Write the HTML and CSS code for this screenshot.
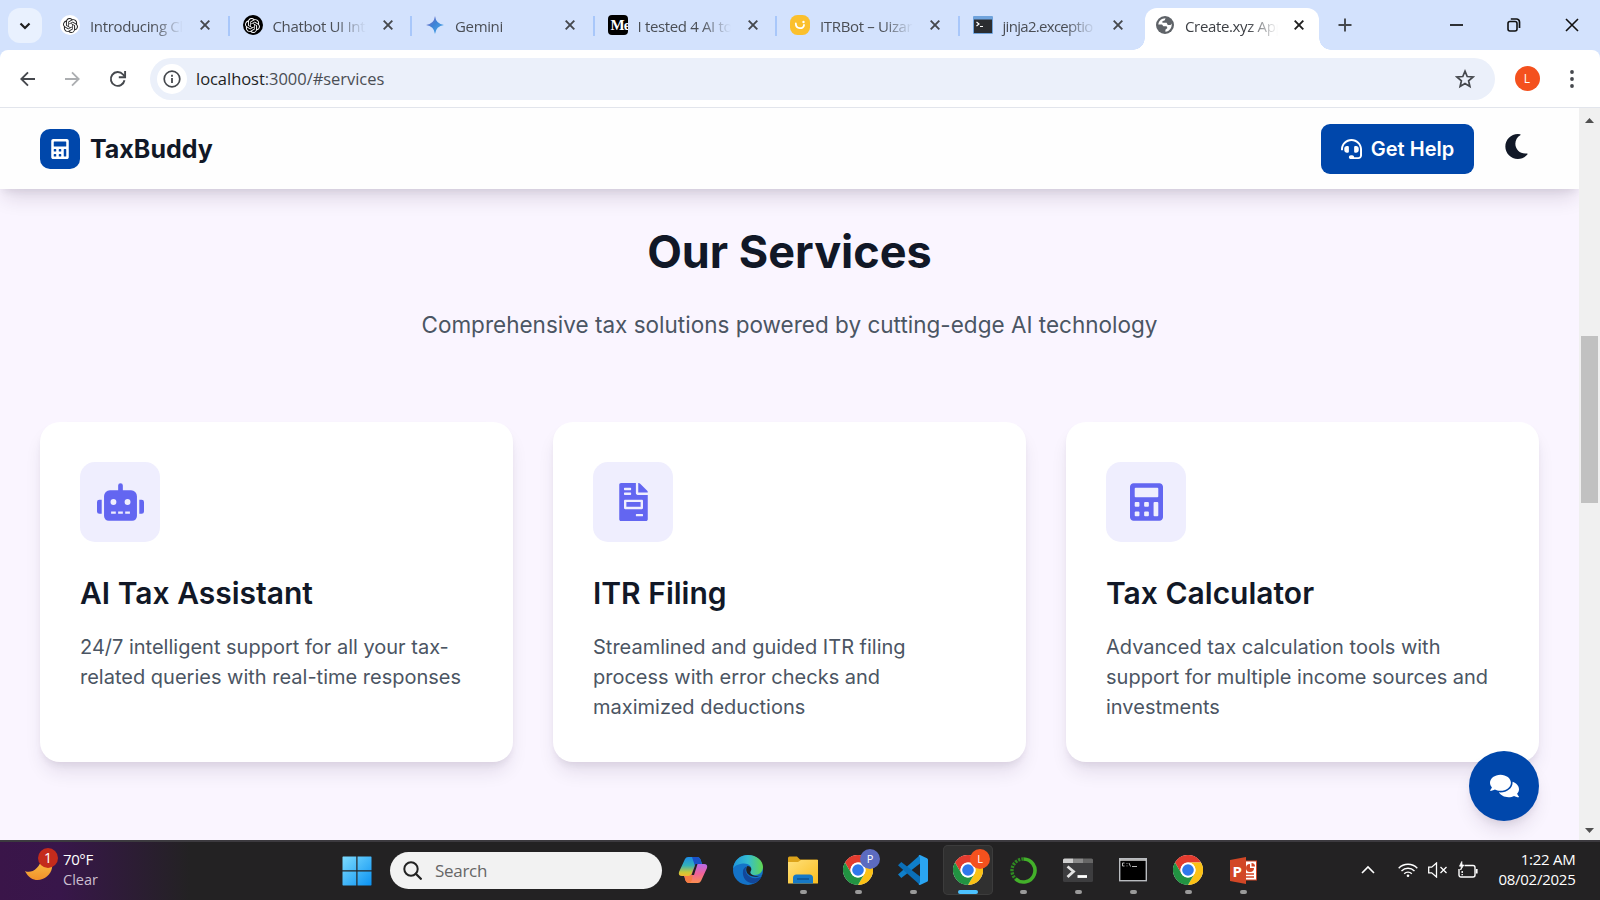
FILE: index.html
```html
<!DOCTYPE html>
<html lang="en">
<head>
<meta charset="utf-8">
<title>TaxBuddy</title>
<link rel="stylesheet" href="styles.css">
</head>
<body>
<svg class="defs" width="0" height="0">
  <defs>
    <symbol id="close" viewBox="0 0 12 12"><path d="M1.7 1.7l8.6 8.6M10.3 1.7l-8.6 8.6" stroke="currentColor" stroke-width="1.9" fill="none"/></symbol>
    <symbol id="openai" viewBox="0 0 24 24"><path fill="currentColor" d="M22.2819 9.8211a5.9847 5.9847 0 0 0-.5157-4.9108 6.0462 6.0462 0 0 0-6.5098-2.9A6.0651 6.0651 0 0 0 4.9807 4.1818a5.9847 5.9847 0 0 0-3.9977 2.9 6.0462 6.0462 0 0 0 .7427 7.0966 5.98 5.98 0 0 0 .511 4.9107 6.051 6.051 0 0 0 6.5146 2.9001A5.9847 5.9847 0 0 0 13.2599 24a6.0557 6.0557 0 0 0 5.7718-4.2058 5.9894 5.9894 0 0 0 3.9977-2.9001 6.0557 6.0557 0 0 0-.7475-7.0729zm-9.022 12.6081a4.4755 4.4755 0 0 1-2.8764-1.0408l.1419-.0804 4.7783-2.7582a.7948.7948 0 0 0 .3927-.6813v-6.7369l2.02 1.1686a.071.071 0 0 1 .038.052v5.5826a4.504 4.504 0 0 1-4.4945 4.4944zm-9.6607-4.1254a4.4708 4.4708 0 0 1-.5346-3.0137l.142.0852 4.783 2.7582a.7712.7712 0 0 0 .7806 0l5.8428-3.3685v2.3324a.0804.0804 0 0 1-.0332.0615L9.74 19.9502a4.4992 4.4992 0 0 1-6.1408-1.6464zM2.3408 7.8956a4.485 4.485 0 0 1 2.3655-1.9728V11.6a.7664.7664 0 0 0 .3879.6765l5.8144 3.3543-2.0201 1.1685a.0757.0757 0 0 1-.071 0l-4.8303-2.7865A4.504 4.504 0 0 1 2.3408 7.872zm16.5963 3.8558L13.1038 8.364 15.1192 7.2a.0757.0757 0 0 1 .071 0l4.8303 2.7913a4.4944 4.4944 0 0 1-.6765 8.1042v-5.6772a.79.79 0 0 0-.407-.667zm2.0107-3.0231l-.142-.0852-4.7735-2.7818a.7759.7759 0 0 0-.7854 0L9.409 9.2297V6.8974a.0662.0662 0 0 1 .0284-.0615l4.8303-2.7866a4.4992 4.4992 0 0 1 6.6802 4.66zM8.3065 12.863l-2.02-1.1638a.0804.0804 0 0 1-.038-.0567V6.0742a4.4992 4.4992 0 0 1 7.3757-3.4537l-.142.0805L8.704 5.459a.7948.7948 0 0 0-.3927.6813zm1.0976-2.3654l2.602-1.4998 2.6069 1.4998v2.9994l-2.5974 1.4997-2.6067-1.4997Z"/></symbol>
    <symbol id="calculator" viewBox="0 0 448 512"><path fill="currentColor" fill-rule="evenodd" d="M400 0H48C22.4 0 0 22.4 0 48v416c0 25.6 22.4 48 48 48h352c25.6 0 48-22.4 48-48V48c0-25.6-22.4-48-48-48zM76.800 384h38.400q12.800 0 12.800 12.800v38.400q0 12.800-12.800 12.800h-38.400q-12.800 0-12.800-12.800v-38.400q0-12.800 12.800-12.800zM76.800 256h38.400q12.800 0 12.800 12.800v38.400q0 12.800-12.800 12.800h-38.400q-12.800 0-12.800-12.800v-38.400q0-12.800 12.800-12.800zM204.800 384h38.400q12.800 0 12.800 12.800v38.400q0 12.800-12.800 12.800h-38.400q-12.800 0-12.800-12.800v-38.400q0-12.800 12.800-12.800zM204.800 256h38.400q12.800 0 12.800 12.800v38.400q0 12.800-12.800 12.800h-38.400q-12.800 0-12.800-12.800v-38.400q0-12.800 12.800-12.800zM332.800 256h38.400q12.800 0 12.800 12.800v166.400q0 12.800-12.800 12.800h-38.400q-12.800 0-12.800-12.800v-166.400q0-12.800 12.800-12.800zM76.800 64h294.400q12.800 0 12.800 12.800v102.400q0 12.800-12.800 12.800h-294.400q-12.800 0-12.800-12.800v-102.400q0-12.800 12.800-12.800z"/></symbol>
    <symbol id="chrome" viewBox="0 0 48 48">
      <circle cx="24" cy="24" r="24" fill="#fff"/>
      <path fill="#e33b2e" d="M3.2 12A24 24 0 0 1 44.8 12H24A12 12 0 0 0 13.6 30z"/>
      <path fill="#fbc116" d="M44.8 12A24 24 0 0 1 24 48L34.4 30A12 12 0 0 0 24 12z"/>
      <path fill="#229342" d="M24 48A24 24 0 0 1 3.2 12L13.6 30A12 12 0 0 0 34.4 30z"/>
      <circle cx="24" cy="24" r="12" fill="#fff"/><circle cx="24" cy="24" r="9.3" fill="#2f78ec"/>
    </symbol>
    <linearGradient id="gGem" x1="0" y1="0" x2="1" y2="1"><stop offset="0" stop-color="#a06ac0"/><stop offset=".45" stop-color="#3d82d6"/><stop offset="1" stop-color="#4fb4ee"/></linearGradient>
    <linearGradient id="gWin" x1="0" y1="0" x2="1" y2="1"><stop offset="0" stop-color="#7ddcff"/><stop offset="1" stop-color="#0a92f2"/></linearGradient>
    <linearGradient id="gMoon" x1="0" y1="0" x2="0" y2="1"><stop offset="0" stop-color="#fbc64a"/><stop offset="1" stop-color="#f2902a"/></linearGradient>
    <linearGradient id="gCopA" x1="0" y1="0" x2="0" y2="1"><stop offset="0" stop-color="#1c8ce8"/><stop offset=".45" stop-color="#34b1b8"/><stop offset=".8" stop-color="#c7c93a"/><stop offset="1" stop-color="#f2b72e"/></linearGradient>
    <linearGradient id="gCopB" x1="0" y1="0" x2="0" y2="1"><stop offset="0" stop-color="#b66be8"/><stop offset=".5" stop-color="#f0629a"/><stop offset="1" stop-color="#fb8f50"/></linearGradient>
    <linearGradient id="gEdge" x1="0" y1="0" x2="1" y2="0"><stop offset="0" stop-color="#1f96dc"/><stop offset=".5" stop-color="#35bdd0"/><stop offset="1" stop-color="#62d84f"/></linearGradient>
    <linearGradient id="gFold" x1="0" y1="0" x2="1" y2="1"><stop offset="0" stop-color="#ffe07a"/><stop offset="1" stop-color="#f9bd1f"/></linearGradient>
  </defs>
</svg>

<div class="screen">
  <div class="tabstrip">
    <button class="tab-search"><svg width="12" height="12" viewBox="0 0 12 12"><path d="M1.5 3.5L6 8l4.500-4.500" fill="none" stroke="#1f1f1f" stroke-width="2.200"/></svg></button>
    <div class="tab"><span class="fav fav-round fav-light"><svg width="15" height="15"><use href="#openai"/></svg></span><span class="tab-title">Introducing Cl</span><svg class="x"><use href="#close"/></svg></div>
    <div class="tab"><span class="fav fav-round fav-dark"><svg width="15" height="15"><use href="#openai"/></svg></span><span class="tab-title">Chatbot UI Int</span><svg class="x"><use href="#close"/></svg></div>
    <div class="tab"><span class="fav"><svg width="18" height="18" viewBox="0 0 18 18"><path fill="url(#gGem)" d="M9 0Q10 8 18 9Q10 10 9 18Q8 10 0 9Q8 8 9 0z"/></svg></span><span class="tab-title">Gemini</span><svg class="x"><use href="#close"/></svg></div>
    <div class="tab"><span class="fav fav-medium">Me</span><span class="tab-title">I tested 4 AI to</span><svg class="x"><use href="#close"/></svg></div>
    <div class="tab"><span class="fav"><svg width="20" height="20" viewBox="0 0 20 20"><rect width="20" height="20" rx="7.500" fill="#fbc02d"/><path d="M5.800 8.500c0 6 8.200 6 8.200 1.500" fill="none" stroke="#fff" stroke-width="1.800" stroke-linecap="round"/><circle cx="13.500" cy="7" r="1.200" fill="#fff"/></svg></span><span class="tab-title">ITRBot – Uizar</span><svg class="x"><use href="#close"/></svg></div>
    <div class="tab no-sep"><span class="fav"><svg width="20" height="18" viewBox="0 0 20 18"><rect width="20" height="18" rx="1" fill="#6fa3dc"/><rect x="1" y="3.500" width="18" height="13.500" fill="#2b2d30"/><path d="M3.500 6l2.500 2-2.500 2M7 10.500h3" fill="none" stroke="#fff" stroke-width="1.200"/></svg></span><span class="tab-title tight">jinja2.exceptio</span><svg class="x"><use href="#close"/></svg></div>
    <div class="tab active"><span class="fav"><svg width="18" height="18" viewBox="0 0 18 18"><circle cx="9" cy="9" r="9" fill="#5f6368"/><path fill="#fff" d="M2.300 8.500C2.600 5 5.500 2.300 9.500 2.200L8.800 4.200 6.400 5.200v1.600h4.200l1.200 2.200h2.800l1-1.600c.6 4-2 8-6.200 8.300v-2l2-1.700-.8-1.700H7.400L6 8.600z"/></svg></span><span class="tab-title">Create.xyz App</span><svg class="x dark"><use href="#close"/></svg></div>
    <svg class="new-tab" width="14" height="14" viewBox="0 0 14 14"><path d="M7 .5v13M.5 7h13" stroke="#45484d" stroke-width="1.900"/></svg>
    <div class="win-controls">
      <svg width="13" height="14" viewBox="0 0 13 14"><path d="M0 7h13" stroke="#111" stroke-width="1.700"/></svg>
      <svg width="14" height="14" viewBox="0 0 14 14"><rect x="1" y="3.500" width="9" height="9.500" rx="2" fill="none" stroke="#111" stroke-width="1.600"/><path d="M3.800 1h5.700a3 3 0 0 1 3 3v6" fill="none" stroke="#111" stroke-width="1.700"/></svg>
      <svg width="14" height="14" viewBox="0 0 14 14"><path d="M1 1l12 12M13 1L1 13" stroke="#111" stroke-width="1.600"/></svg>
    </div>
  </div>

  <div class="toolbar">
    <svg width="16" height="16" viewBox="0 0 16 16"><path d="M15 8H1.500M8 1.300L1.300 8 8 14.700" fill="none" stroke="#45484d" stroke-width="1.900"/></svg>
    <svg width="16" height="16" viewBox="0 0 16 16"><path d="M1 8h13.500M8 1.300L14.700 8 8 14.700" fill="none" stroke="#acaeb1" stroke-width="1.800"/></svg>
    <svg width="18" height="18" viewBox="0 0 18 18"><path d="M15.500 10.300A6.900 6.900 0 1 1 14 4.500L15.600 6.300" fill="none" stroke="#45484d" stroke-width="1.900"/><path d="M16.100 1v6.300H9.800" fill="none" stroke="#45484d" stroke-width="1.900"/></svg>
    <div class="omnibox">
      <span class="info"><svg width="18" height="18" viewBox="0 0 18 18"><circle cx="9" cy="9" r="7.800" fill="none" stroke="#45484d" stroke-width="1.700"/><path d="M9 8v5M9 4.800v1.900" stroke="#45484d" stroke-width="1.800"/></svg></span>
      <span class="url"><b>localhost</b>:3000/#services</span>
      <svg width="20" height="20" viewBox="0 0 20 20"><path d="M10 2.200l2.200 5.300 5.800.5-4.400 3.800 1.300 5.700L10 14.500l-4.900 3 1.300-5.700L2 8l5.800-.5z" fill="none" stroke="#45484d" stroke-width="1.700"/></svg>
    </div>
    <span class="avatar">L</span>
    <svg class="kebab" width="4" height="18" viewBox="0 0 4 18" fill="#45484d"><circle cx="2" cy="2" r="1.900"/><circle cx="2" cy="9" r="1.900"/><circle cx="2" cy="16" r="1.900"/></svg>
  </div>

  <div class="viewport">
    <div class="page">
      <header class="site-header">
        <span class="logo"><svg width="18" height="20"><use href="#calculator"/></svg></span>
        <span class="brand">TaxBuddy</span>
        <button class="help"><svg width="21" height="20" viewBox="0 0 512 512" preserveAspectRatio="none" fill="#fff"><path d="M192 208c0-17.670-14.330-32-32-32h-16c-35.350 0-64 28.650-64 64v48c0 35.350 28.650 64 64 64h16c17.670 0 32-14.330 32-32V208zm176 144c35.350 0 64-28.650 64-64v-48c0-35.350-28.650-64-64-64h-16c-17.670 0-32 14.330-32 32v112c0 17.670 14.330 32 32 32h16zM256 0C113.180 0 4.580 118.830 0 256v16c0 8.840 7.160 16 16 16h16c8.840 0 16-7.160 16-16v-16c0-114.690 93.310-208 208-208s208 93.310 208 208h-.12c.08 2.430.12 165.720.12 165.720 0 23.350-18.930 42.280-42.280 42.280H320c0-26.510-21.490-48-48-48h-32c-26.510 0-48 21.490-48 48s21.490 48 48 48h181.720c49.860 0 90.280-40.420 90.280-90.280V256C507.420 118.830 398.820 0 256 0z"/></svg>Get Help</button>
        <svg class="moon" width="25" height="25" viewBox="0 0 512 512" fill="#111827"><path d="M283.211 512c78.962 0 151.079-35.925 198.857-94.792 7.068-8.708-.639-21.430-11.562-19.350-124.203 23.654-238.262-71.576-238.262-196.954 0-72.222 38.662-138.635 101.498-174.394 9.686-5.512 7.250-20.197-3.756-22.230A258.156 258.156 0 0 0 283.211 0c-141.309 0-256 114.511-256 256 0 141.309 114.511 256 256 256z"/></svg>
      </header>
      <main class="services">
        <h2>Our Services</h2>
        <p class="lead">Comprehensive tax solutions powered by cutting-edge AI technology</p>
        <div class="cards">
          <article class="card">
            <span class="tile"><svg width="47" height="38" viewBox="0 0 640 512" fill="#6366f1"><path d="M32,224H64V416H32A32,32,0,0,1,0,384V256A32,32,0,0,1,32,224Zm512-48V448a64,64,0,0,1-64,64H160a64,64,0,0,1-64-64V176a80,80,0,0,1,80-80H288V32a32,32,0,0,1,64,0V96H464A80,80,0,0,1,544,176ZM264,256a40,40,0,1,0-40,40A40,40,0,0,0,264,256Zm-8,128H192v32h64Zm96,0H288v32h64ZM456,256a40,40,0,1,0-40,40A40,40,0,0,0,456,256Zm-8,128H384v32h64ZM640,256V384a32,32,0,0,1-32,32H576V224h32A32,32,0,0,1,640,256Z"/></svg></span>
            <h3>AI Tax Assistant</h3>
            <p>24/7 intelligent support for all your tax-related queries with real-time responses</p>
          </article>
          <article class="card">
            <span class="tile"><svg width="29" height="38" viewBox="0 0 384 512" fill="#6366f1"><path d="M288 256H96v64h192v-64zm89-151L279.100 7c-4.500-4.500-10.600-7-17-7H256v128h128v-6.100c0-6.300-2.500-12.400-7-16.900zm-153 31V0H24C10.700 0 0 10.700 0 24v464c0 13.300 10.700 24 24 24h336c13.300 0 24-10.700 24-24V160H248c-13.200 0-24-10.800-24-24zM64 72c0-4.420 3.580-8 8-8h80c4.420 0 8 3.580 8 8v16c0 4.420-3.580 8-8 8H72c-4.420 0-8-3.580-8-8V72zm0 64c0-4.420 3.580-8 8-8h80c4.420 0 8 3.580 8 8v16c0 4.420-3.580 8-8 8H72c-4.420 0-8-3.580-8-8v-16zm256 304c0 4.420-3.580 8-8 8h-80c-4.420 0-8-3.580-8-8v-16c0-4.420 3.580-8 8-8h80c4.420 0 8 3.580 8 8v16zm0-200v96c0 8.840-7.160 16-16 16H80c-8.840 0-16-7.160-16-16v-96c0-8.840 7.160-16 16-16h224c8.840 0 16 7.160 16 16z"/></svg></span>
            <h3>ITR Filing</h3>
            <p>Streamlined and guided ITR filing process with error checks and maximized deductions</p>
          </article>
          <article class="card">
            <span class="tile"><svg width="33" height="38"><use href="#calculator"/></svg></span>
            <h3>Tax Calculator</h3>
            <p>Advanced tax calculation tools with support for multiple income sources and investments</p>
          </article>
        </div>
      </main>
      <button class="chat"><svg width="29" height="26" viewBox="0 0 576 512" fill="#fff"><path d="M416 192c0-88.400-93.100-160-208-160S0 103.600 0 192c0 34.300 14.100 65.900 38 92-13.400 30.200-35.500 54.200-35.800 54.500-2.200 2.300-2.800 5.700-1.500 8.700S4.800 352 8 352c36.600 0 66.900-12.300 88.700-25 32.200 15.700 70.300 25 111.300 25 114.900 0 208-71.600 208-160zm122 220c23.900-26 38-57.700 38-92 0-66.900-53.500-124.200-129.300-148.100.9 6.600 1.300 13.300 1.300 20.100 0 105.900-107.700 192-240 192-10.800 0-21.300-.8-31.700-1.900C207.800 439.600 281.800 480 368 480c41 0 79.100-9.200 111.300-25 21.800 12.700 52.100 25 88.700 25 3.200 0 6.100-1.900 7.300-4.800 1.300-2.900.7-6.300-1.500-8.700-.3-.3-22.400-24.200-35.800-54.500z"/></svg></button>
    </div>
    <div class="scrollbar">
      <svg width="9" height="5" viewBox="0 0 9 5"><path d="M0 5L4.500 0 9 5z" fill="#505050"/></svg>
      <span class="thumb"></span>
      <svg width="9" height="5" viewBox="0 0 9 5"><path d="M0 0l4.500 5L9 0z" fill="#505050"/></svg>
    </div>
  </div>

  <div class="taskbar">
    <div class="weather">
      <div class="weather-icon"><svg width="28" height="24" viewBox="0 0 28 24"><path d="M0 14C6 17 15 12 17 0C24 0 28 5 27 11C25 22 8 30 0 14z" fill="url(#gMoon)"/></svg><span class="count">1</span></div>
      <div class="weather-text"><div>70°F</div><div class="dim">Clear</div></div>
    </div>
    <svg class="start" width="30" height="30" viewBox="0 0 30 30"><path fill="url(#gWin)" d="M1 .5h13.300v13.800H.5V1zM15.500.5h13.500l.5.500v13.300h-14zM.5 15.500h13.800v14H1l-.5-.5zM15.500 15.500h14v13.500l-.5.500H15.500z"/></svg>
    <div class="search"><svg width="19" height="19" viewBox="0 0 19 19"><circle cx="8" cy="8" r="6.700" fill="none" stroke="#222" stroke-width="2"/><path d="M12.800 12.800l5 5" stroke="#222" stroke-width="2.300" stroke-linecap="round"/></svg>Search</div>
    <div class="apps">
      <div class="app"><svg width="30" height="28" viewBox="0 0 30 28"><path fill="url(#gCopA)" d="M7 3Q8 1 10 1h9q3 0 4 4l1 3h-4q-2 0-3 3l-2.500 7q-1 2-3 2H4Q0 20 1 16z"/><path fill="#1a51c8" d="M14 1h5q3 0 4 4l1 3h-4q-2 0-3 2z"/><path fill="url(#gCopB)" d="M23 25q-1 2-3 2h-9q-3 0-4-4l-1-3h5q2 0 3-3l2.500-7q1-2 3-2H26q4 0 3 4z"/><path fill="#f57b43" d="M7 20h5q2 0 3-3l-1 7q-1 3-3 3q-3 0-4-4z"/><path fill="#232223" d="M17.500 8h2l-3.500 11h-2.500z"/></svg></div>
      <div class="app"><svg width="30" height="30" viewBox="0 0 30 30"><circle cx="15" cy="15" r="15" fill="#1473c8"/><path d="M0 14C1 5 7 0 15 0c9 0 15 6 15 12 0 5-4 8-8 8-4 0-5.500-2-4.500-3.500C20 13 17 8 10 8.500 5 9 1 11 0 14z" fill="url(#gEdge)"/><path d="M10 16c-1 7 4 12 10 12.500 4-1 7-3.500 8.500-7-5 3-12 2-15-3-1.500-2.500-1-5 0-7-2 1-3.300 2.500-3.500 4.500z" fill="#12479a"/><path d="M17.500 16.500c2-2.500 0-5.500-3-5.500-2 2-1.500 6 .5 8 3 3 9 4 13.500 1l1.500 1-2 2.500c2-3 2-4 1-3.500-5 2.500-13 0-11.500-3.500z" fill="#222"/></svg></div>
      <div class="app run"><svg width="30" height="28" viewBox="0 0 30 28"><path d="M0 2Q0 .5 1.500.5H9l3 3H29q1 0 1 1V10H0z" fill="#dca31a"/><path d="M0 6h10l3-2h17v23q0 .5-.5.500H.5q-.5 0-.5-.5z" fill="url(#gFold)"/><path d="M5 27.500V22q0-3.500 3.500-3.500h13q3.500 0 3.500 3.500v5.500z" fill="#1679c6"/><path d="M9 23h12" stroke="#0b4c8a" stroke-width="1.300"/></svg></div>
      <div class="app run"><svg width="30" height="30"><use href="#chrome"/></svg><span class="badge p">P</span></div>
      <div class="app run"><svg width="30" height="30" viewBox="0 0 30 30"><path fill="#0f7fca" d="M22 0L0 19.500 3.300 23 22 8.500z"/><path fill="#0a6fb8" d="M3.300 7L0 10.300 22 30V21.500z"/><path fill="#2aa5f2" d="M22 0l7 3.200q1 .5 1 1.500v20.600q0 1-1 1.500L22 30q-1 0-1.500-1 1.500-.5 1.500-2V3q0-1.500-1.500-2Q21 0 22 0z"/></svg></div>
      <div class="app run current"><svg width="30" height="30"><use href="#chrome"/></svg><span class="badge l">L</span></div>
      <div class="app run"><svg width="27" height="27" viewBox="0 0 27 27" fill="none"><path d="M13.500 2a11.500 11.500 0 1 1-8 19.800" stroke="#43b02a" stroke-width="3.600"/><path d="M13.500 2A11.500 11.500 0 0 0 5.500 21.800" stroke="#2f8a22" stroke-width="3.400" stroke-dasharray="2.200 1.100"/></svg></div>
      <div class="app run"><svg width="30" height="24" viewBox="0 0 30 24"><rect y="1" width="30" height="23" rx="1.500" fill="#3d3d3f"/><path d="M0 5V2Q0 .5 1.500.5H10V5z" fill="#cfcfcf"/><path d="M10 .5h10V5H10z" fill="#8a8a8a"/><path d="M20 .5h8.500Q30 .5 30 2v3H20z" fill="#666"/><path d="M4.500 8.500l6 5-6 5.500" fill="none" stroke="#e2e2e2" stroke-width="2.800"/><path d="M14.500 18.500h9.500" stroke="#fff" stroke-width="2.800"/></svg></div>
      <div class="app run"><svg width="28" height="24" viewBox="0 0 28 24"><rect x=".7" y=".7" width="26.600" height="22" fill="#000" stroke="#b9bcc0" stroke-width="1.400"/><path d="M1 2h26" stroke="#d8d8d8" stroke-width="1.500"/><path d="M5.500 5h-2v3h2M8 5v.8M8 7.500v.8M10 5l1.500 3.500M13 8.500h5" stroke="#ccc" stroke-width=".9" fill="none"/></svg></div>
      <div class="app run"><svg width="30" height="30"><use href="#chrome"/></svg></div>
      <div class="app run"><div class="ppt"><svg width="27" height="27" viewBox="0 0 27 27"><rect x="13" y="4" width="13.500" height="19" fill="#fff" stroke="#d24726" stroke-width="1"/><path d="M20 7a4 4 0 1 0 4 4h-4z" fill="#d24726"/><path d="M21.500 6v3.500H25A3.500 3.500 0 0 0 21.500 6z" fill="#d24726"/><path d="M16 17h8M16 20h8" stroke="#d24726" stroke-width="1.400"/><path d="M0 3L16 0v27L0 24z" fill="#d24726"/></svg><span>P</span></div></div>
    </div>
    <div class="tray">
      <svg width="14" height="9" viewBox="0 0 14 9"><path d="M1 8l6-6 6 6" fill="none" stroke="#fff" stroke-width="1.600"/></svg>
      <svg class="wifi" width="20" height="16" viewBox="0 0 20 16" fill="none" stroke="#fff" stroke-width="1.400"><path d="M.7 6.200a13 13 0 0 1 18.600 0M3.500 9a9.200 9.200 0 0 1 13 0M6.200 11.700a5.400 5.400 0 0 1 7.600 0"/><circle cx="10" cy="13.700" r="1.300" fill="#fff" stroke="none"/></svg>
      <svg width="20" height="16" viewBox="0 0 20 16" fill="none" stroke="#fff" stroke-width="1.300"><path d="M.7 5.200h3L8.500 1v14l-4.800-4.200h-3z"/><path d="M12.500 5l6 6M18.500 5l-6 6"/></svg>
      <svg width="20" height="18" viewBox="0 0 20 18" fill="none" stroke="#fff" stroke-width="1.400"><path d="M6.500 4.500H15a2 2 0 0 1 2 2V14a2 2 0 0 1-2 2H3a2 2 0 0 1-2-2V8"/><path d="M18.700 8v4.500" stroke-width="1.800"/><path d="M3.800.5L1.500 5.200h2L2.600 9 5.800 4H4z" fill="#fff" stroke-width=".8"/><path d="M4.200 10v2M4.200 13v1.300"/></svg>
      <div class="clock"><div>1:22 AM</div><div>08/02/2025</div></div>
    </div>
  </div>
</div>
</body>
</html>
```

FILE: styles.css
```css
* { box-sizing: border-box; }
body { margin: 0; font-family: "Open Sans", "Noto Sans", sans-serif; }
svg { display: block; flex: none; }
button { border: 0; padding: 0; font: inherit; }
.defs { position: absolute; }
.screen { width: 1600px; height: 900px; display: flex; flex-direction: column; overflow: hidden; }

/* browser tabs */
.tabstrip { height: 50px; flex: none; background: #d3e2fd; display: flex; align-items: stretch; position: relative; padding-left: 8px; }
.tab-search { width: 34px; height: 35px; margin: 8px 4px 0 0; border-radius: 12px; background: #e9f1fe; display: grid; place-items: center; }
.tab { width: 182.500px; display: flex; align-items: center; padding: 0 0 0 14px; position: relative; color: #4a4e55; font-size: 15px; }
.tab::after { content: ""; position: absolute; right: -1px; top: 16px; width: 2px; height: 20px; background: #a8c7fa; }
.tab.no-sep::after { display: none; }
.fav { width: 20px; height: 20px; display: grid; place-items: center; flex: none; }
.fav-round { border-radius: 50%; }
.fav-light { background: #fff; color: #222; }
.fav-dark { background: #000; color: #fff; }
.fav-medium { background: #000; color: #fff; border-radius: 4px; font: bold 15px/20px "Liberation Serif", serif; overflow: hidden; justify-items: start; padding-left: 3px; letter-spacing: -1px; }
.tab-title { width: 95px; margin-left: 8px; padding: 2px 0 0 2px; letter-spacing: -.35px; white-space: nowrap; overflow: hidden; mask-image: linear-gradient(90deg, #000 68%, transparent 100%); }
.tab-title.tight { letter-spacing: -.7px; }
.x { width: 12px; height: 12px; margin-left: 16px; color: #45484d; }
.x.dark { color: #1f1f1f; margin-left: 15px; }
.tab.active { color: #3c3f44; }
.tab.active::before { content: ""; position: absolute; inset: 8px 4.500px 0 4px; background: #fff; border-radius: 12px 12px 0 0; }
.tab.active::after { left: -8px; right: -7.500px; top: auto; bottom: 0; width: auto; height: 12px; background: radial-gradient(circle at 0 0, transparent 11.500px, #fff 12px) left / 12px 12px no-repeat, radial-gradient(circle at 100% 0, transparent 11.500px, #fff 12px) right / 12px 12px no-repeat; }
.tab.active > * { position: relative; z-index: 1; }
.new-tab { margin: 18px 0 0 14px; }
.win-controls { margin: 17.500px 21.500px 0 auto; display: flex; gap: 44px; }

/* browser toolbar */
.toolbar { height: 58px; flex: none; background: #fff; border-bottom: 1px solid #e2e5ec; display: flex; align-items: center; padding-left: 20px; border-radius: 8px 8px 0 0; box-shadow: 0 -8px 0 #d3e2fd; }
.toolbar > svg:nth-child(2) { margin-left: 28px; }
.toolbar > svg:nth-child(3) { margin-left: 28.500px; }
.omnibox { margin-left: 23.500px; width: 1344.500px; height: 42px; border-radius: 21px; background: #ebf0fa; display: flex; align-items: center; padding: 0 20px 0 7px; }
.info { width: 30px; height: 30px; border-radius: 50%; background: #fff; display: grid; place-items: center; }
.url { flex: 1; margin-left: 9px; font-size: 16.500px; letter-spacing: -.04px; color: #4a4e54; }
.url b { font-weight: 400; color: #1f1f1f; }
.avatar { width: 25px; height: 25px; margin-left: 20px; border-radius: 50%; background: #f4511e; color: #fff; font-size: 12px; display: grid; place-items: center; }
.kebab { margin-left: 30.500px; }

/* page */
.viewport { height: 732px; flex: none; display: flex; }
.page { width: 1579px; background: #faf5ff; position: relative; font-family: Inter, sans-serif; overflow: hidden; color: #111827; }
.site-header { height: 81px; background: #fefefe; display: flex; align-items: center; padding: 0 47px 0 40px; position: relative; box-shadow: 0 12.500px 19px -4px rgba(40, 20, 60, .14), 0 5px 7.500px -2.500px rgba(40, 20, 60, .08); }
.logo { width: 40px; height: 40px; border-radius: 10px; background: #0047ab; color: #fff; display: grid; place-items: center; }
.brand { margin-left: 10px; padding-top: 1px; font-size: 25px; font-weight: 700; }
.help { margin-left: auto; width: 153px; height: 50px; border-radius: 9px; background: #0047ab; color: #fff; font-size: 20px; font-weight: 600; display: flex; align-items: center; justify-content: center; gap: 9px; }
.moon { margin: -5px 3px 0 30px; }
.services { padding: 38px 40px 0; }
.services h2 { margin: 0; text-align: center; font-size: 45px; line-height: 50px; font-weight: 700; }
.lead { margin: 30px 0 0; text-align: center; font-size: 22.500px; line-height: 35px; letter-spacing: .01px; color: #4b5563; }
.cards { margin-top: 80px; display: grid; grid-template-columns: repeat(3, 1fr); gap: 40px; }
.card { height: 340px; border-radius: 20px; background: #fff; padding: 40px; box-shadow: 0 12.500px 19px -4px rgba(40, 20, 60, .11), 0 5px 7.500px -2.500px rgba(40, 20, 60, .07); }
.tile { width: 80px; height: 80px; border-radius: 15px; background: #efeefe; color: #6366f1; display: grid; place-items: center; }
.card h3 { margin: 31px 0 0; font-size: 30px; line-height: 40px; font-weight: 600; }
.card p { margin: 19px 0 0; font-size: 20px; line-height: 30px; color: #4b5563; }
.chat { position: absolute; right: 40px; bottom: 19px; width: 70px; height: 70px; border-radius: 50%; background: #0047ab; display: grid; place-items: center; box-shadow: 0 12px 19px -4px rgba(40, 20, 60, .12), 0 5px 7px -2px rgba(40, 20, 60, .07); }
.scrollbar { width: 21px; background: #f0f0f0; display: flex; flex-direction: column; align-items: center; padding: 10px 0 7px; }
.thumb { width: 17px; height: 167px; margin: 213px 0 auto; background: #c1c1c1; }

/* taskbar */
.taskbar { height: 60px; background: linear-gradient(90deg, #3a1549 0, #38164a 60px, #232223 190px); border-top: 2px solid #3c3a3f; display: flex; color: #fff; font-size: 15px; line-height: 20px; }
.weather { width: 342px; padding: 7px 0 0 25px; display: flex; }
.weather-icon { position: relative; width: 32px; padding-top: 6px; }
.weather-icon svg { margin-top: 2px; }
.count { position: absolute; left: 13px; top: -1px; width: 20px; height: 20px; border-radius: 50%; background: #c42b1c; text-align: center; font-size: 14px; }
.weather-text { margin-left: 6px; letter-spacing: -.4px; }
.dim { color: #cbbfd0; letter-spacing: 0; font-size: 14.500px; padding-top: 1px; }
.start { margin-top: 14px; }
.search { margin: 10px 0 0 18px; width: 272px; height: 37px; border-radius: 19px; background: #f2f2f2; color: #666; font-size: 17px; display: flex; align-items: center; gap: 13px; padding: 0 13px; letter-spacing: -.3px; }
.apps { display: flex; margin-left: 6px; }
.app { width: 50px; height: 50px; margin: 3px 5px 0 0; display: grid; place-items: center; position: relative; border-radius: 5px; }
.app.run::after { content: ""; position: absolute; left: 21.500px; bottom: 1px; width: 7px; height: 4px; border-radius: 2px; background: #9a9a9a; }
.app.current { background: #303030; box-shadow: inset 0 0 0 1px #3c3c3c; }
.app.current::after { left: 15px; width: 20px; background: #4cc2ff; }
.badge { position: absolute; right: 3px; top: 4px; width: 20px; height: 20px; border-radius: 50%; font-size: 11px; line-height: 20px; text-align: center; }
.badge.p { background: #5c6bc0; }
.badge.l { background: #f4511e; }
.ppt { position: relative; }
.ppt span { position: absolute; left: 3px; top: 4px; font-weight: 700; font-size: 15px; }
.tray { margin-left: auto; padding-right: 24.500px; height: 55px; display: flex; align-items: center; gap: 10px; }
.tray .wifi { margin-left: 13px; }
.clock { width: 84px; margin: -2px 0 0 4px; text-align: right; letter-spacing: -.25px; white-space: nowrap; }
```
